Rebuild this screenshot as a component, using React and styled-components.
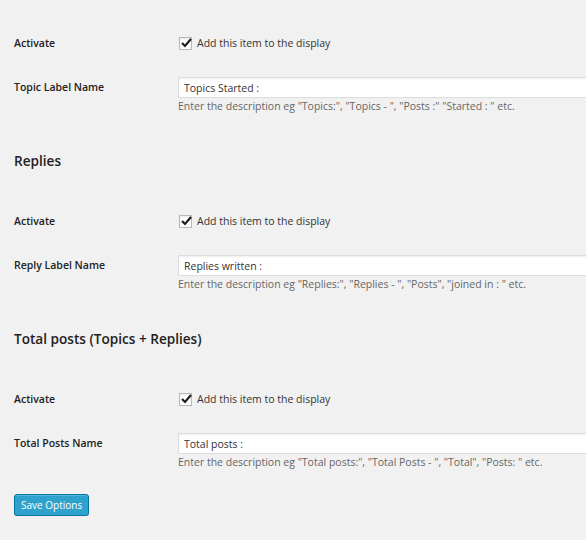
import React from "react"
import styled, { createGlobalStyle } from "styled-components"

const GlobalStyle = createGlobalStyle`
  html, body {
    margin: 0;
    padding: 0;
    background: #f1f1f1;
    overflow: hidden;
  }
  body {
    font-family: "Open Sans", "Noto Sans", sans-serif;
    color: #222;
  }
`

const Page = styled.form`
  padding: 31px 0 0 14px;
  width: 586px;
  box-sizing: border-box;
  overflow: hidden;
`

const Section = styled.section`
  display: flex;
  flex-direction: column;
`

const Heading = styled.h3`
  margin: 39px 0 38px;
  height: 20px;
  line-height: 20px;
  font-size: 13.6px;
  font-weight: 600;
  color: #222;
`

const Row = styled.div`
  display: grid;
  grid-template-columns: 164px 1fr;
  align-items: start;
  margin-top: ${p => (p.$first ? "0" : "22px")};
`

const Label = styled.label`
  font-size: 10.5px;
  font-weight: 600;
  line-height: ${p => (p.$tall ? "20px" : "24px")};
  color: #222;
`

const Field = styled.div`
  display: flex;
  flex-direction: column;
`

const CheckLine = styled.label`
  display: flex;
  align-items: center;
  height: 24px;
  gap: 5px;
  font-size: 10.5px;
  line-height: 22px;
  color: #333;

  span.text {
    margin-top: -1px;
  }
`

const Box = styled.span`
  position: relative;
  width: 11px;
  height: 11px;
  margin-left: 1px;
  border: 1px solid #b4b9be;
  background: #fff;
  box-shadow: inset 0 1px 2px rgba(0, 0, 0, 0.1);

  svg {
    position: absolute;
    left: -1px;
    top: -2px;
  }
`

const TextInput = styled.input`
  box-sizing: border-box;
  width: 440px;
  height: 21px;
  padding: 0 5px;
  border: 1px solid #ddd;
  background: #fff;
  box-shadow: inset 0 1px 2px rgba(0, 0, 0, 0.07);
  font-family: inherit;
  font-size: 10.5px;
  color: #333;
  outline: none;
`

const Description = styled.p`
  margin: 0;
  box-sizing: border-box;
  height: 14px;
  padding-top: 1px;
  line-height: 14px;
  font-size: 10.5px;
  color: #666;
`

const SaveButton = styled.button`
  margin-top: 26px;
  align-self: flex-start;
  height: 22px;
  padding: 0 6px;
  border: 1px solid #0074a2;
  border-radius: 3px;
  background: #2ea2cc;
  box-shadow: inset 0 1px 0 rgba(120, 200, 230, 0.5), 0 1px 0 rgba(0, 0, 0, 0.15);
  color: #fff;
  font-family: inherit;
  font-size: 10px;
  line-height: 20px;
`

function Check() {
  return (
    <Box>
      <svg width="14" height="14" viewBox="0 0 14 14">
        <path d="M3 7 L6 10 L12 3" fill="none" stroke="#1e1e1e" strokeWidth="2.2" />
      </svg>
    </Box>
  )
}

const sections = [
  {
    name: "Topic Label Name",
    value: "Topics Started :",
    hint: 'Enter the description eg "Topics:", "Topics - ", "Posts :" "Started : " etc.'
  },
  {
    title: "Replies",
    name: "Reply Label Name",
    value: "Replies written :",
    hint: 'Enter the description eg "Replies:", "Replies - ", "Posts", "joined in : " etc.'
  },
  {
    title: "Total posts (Topics + Replies)",
    name: "Total Posts Name",
    value: "Total posts :",
    hint: 'Enter the description eg "Total posts:", "Total Posts - ", "Total", "Posts: " etc.'
  }
]

export default function App() {
  return (
    <>
      <GlobalStyle />
      <Page onSubmit={e => e.preventDefault()}>
        {sections.map(s => (
          <Section key={s.name}>
            {s.title && <Heading>{s.title}</Heading>}
            <Row $first>
              <Label>Activate</Label>
              <CheckLine>
                <Check />
                <span className="text">Add this item to the display</span>
              </CheckLine>
            </Row>
            <Row>
              <Label $tall>{s.name}</Label>
              <Field>
                <TextInput defaultValue={s.value} />
                <Description>{s.hint}</Description>
              </Field>
            </Row>
          </Section>
        ))}
        <SaveButton type="submit">Save Options</SaveButton>
      </Page>
    </>
  )
}
